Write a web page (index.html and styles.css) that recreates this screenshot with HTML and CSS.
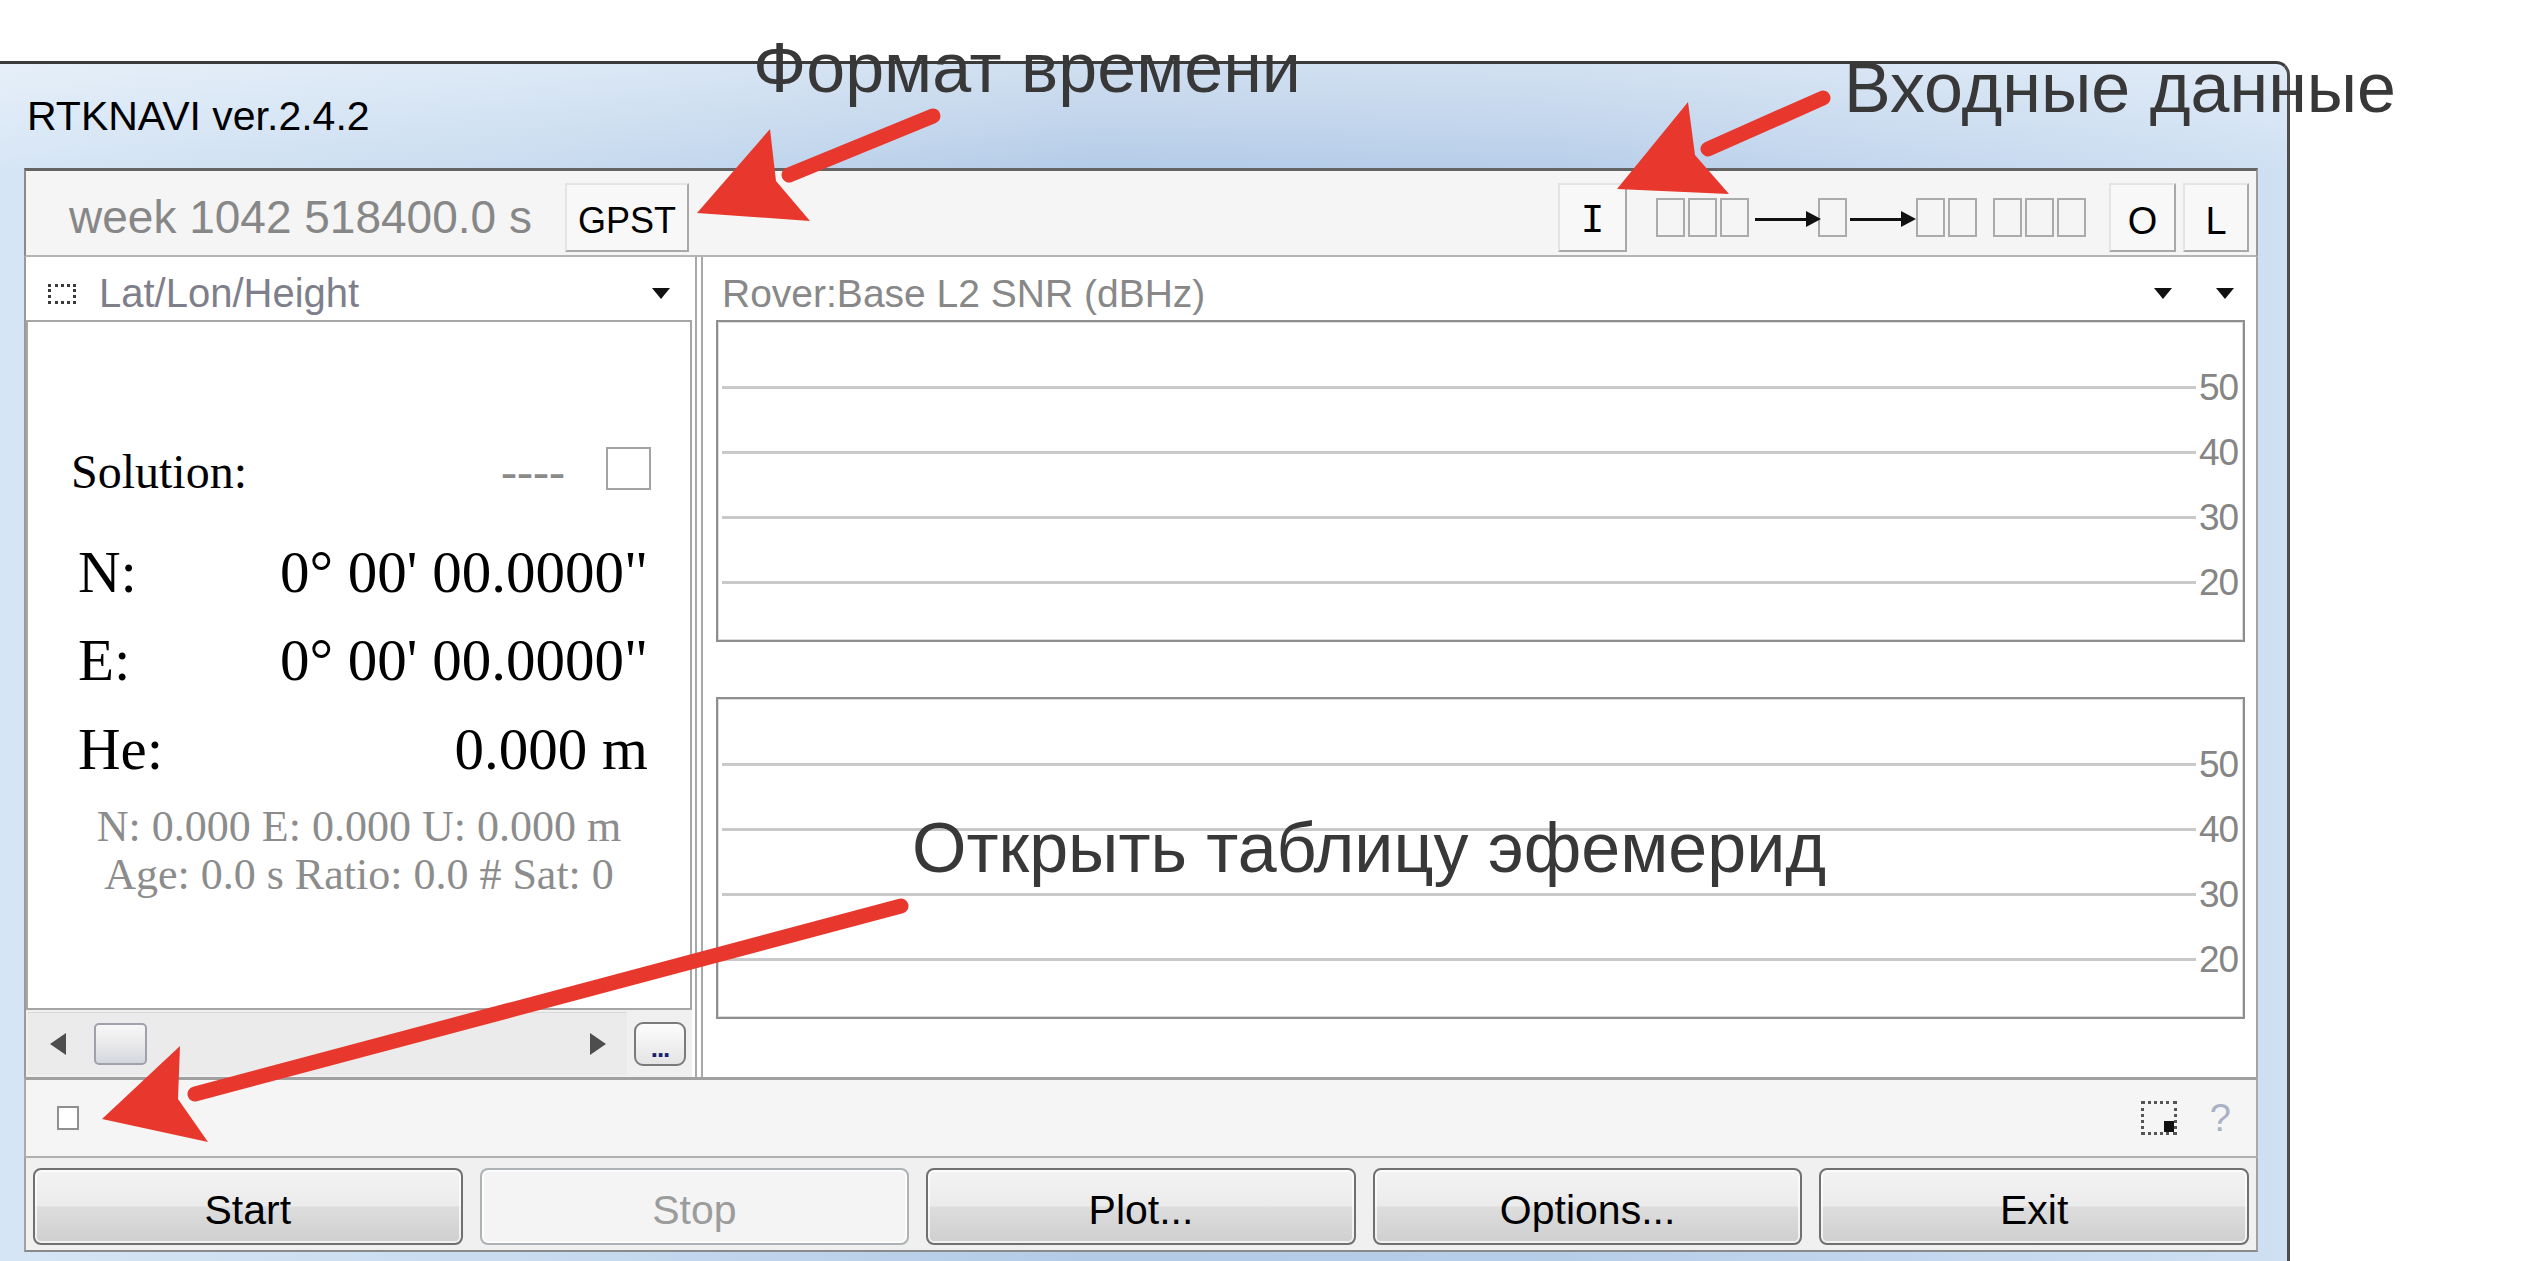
FILE: index.html
```html
<!DOCTYPE html>
<html>
<head>
<meta charset="utf-8">
<title>RTKNAVI ver.2.4.2</title>
<link rel="stylesheet" href="styles.css">
</head>
<body>
<div class="window">
  <div class="titlebar"><span class="title">RTKNAVI ver.2.4.2</span></div>
  <div class="client">
    <div class="toolbar">
      <span class="time">week 1042 518400.0 s</span>
      <span class="sbtn gpst">GPST</span>
      <span class="sbtn mono ibtn">I</span>
      <div class="streams">
        <span class="tofu first"></span><span class="tofu"></span><span class="tofu"></span>
        <span class="flow"></span>
        <span class="tofu t4"></span>
        <span class="flow f2"></span>
        <span class="tofu t5"></span><span class="tofu"></span>
        <span class="tofu t7"></span><span class="tofu"></span><span class="tofu"></span>
      </div>
      <span class="sbtn sans obtn">O</span>
      <span class="sbtn sans lbtn">L</span>
    </div>

    <div class="middle">
      <div class="leftpane">
        <div class="phead lhead">
          <span class="dotsicon"></span>
          <span class="ptitle ltitle">Lat/Lon/Height</span>
          <span class="drop ldrop"></span>
        </div>
        <div class="solbox">
          <div class="solrow">
            <span class="sollabel">Solution:</span>
            <span class="dash">----</span>
            <span class="chk"></span>
          </div>
          <div class="coord first"><span>N:</span><span>0° 00' 00.0000"</span></div>
          <div class="coord"><span>E:</span><span>0° 00' 00.0000"</span></div>
          <div class="coord he"><span>He:</span><span>0.000 m</span></div>
          <div class="sub first">N: 0.000 E: 0.000 U: 0.000 m</div>
          <div class="sub">Age: 0.0 s Ratio: 0.0 # Sat: 0</div>
        </div>
        <div class="scrollrow">
          <div class="track">
            <span class="arr-l"></span>
            <span class="thumb"></span>
            <span class="arr-r"></span>
          </div>
          <span class="more">...</span>
        </div>
      </div>

      <div class="splitter"></div>

      <div class="rightpane">
        <div class="phead rhead">
          <span class="ptitle rtitle">Rover:Base L2 SNR (dBHz)</span>
          <span class="drop d1"></span>
          <span class="drop d2"></span>
        </div>
        <div class="chart">
          <div class="grow"><span class="gline"></span><span class="glabel">50</span></div>
          <div class="grow"><span class="gline"></span><span class="glabel">40</span></div>
          <div class="grow"><span class="gline"></span><span class="glabel">30</span></div>
          <div class="grow"><span class="gline"></span><span class="glabel">20</span></div>
        </div>
        <div class="chart second">
          <div class="grow"><span class="gline"></span><span class="glabel">50</span></div>
          <div class="grow"><span class="gline"></span><span class="glabel">40</span></div>
          <div class="grow"><span class="gline"></span><span class="glabel">30</span></div>
          <div class="grow"><span class="gline"></span><span class="glabel">20</span></div>
        </div>
      </div>
    </div>

    <div class="status">
      <span class="ephem"></span>
      <span class="resize"><span class="knob"></span></span>
      <span class="help">?</span>
    </div>

    <div class="btnrow">
      <button class="btn">Start</button>
      <button class="btn disabled">Stop</button>
      <button class="btn">Plot...</button>
      <button class="btn">Options...</button>
      <button class="btn">Exit</button>
    </div>
  </div>
</div>

<svg class="arrows" width="2536" height="1261" viewBox="0 0 2536 1261">
  <line x1="933" y1="116" x2="789" y2="175" stroke="#e8382d" stroke-width="15" stroke-linecap="round"/>
  <polygon points="697,213 770,129 776,181 810,221" fill="#e8382d"/>
  <line x1="1823" y1="98" x2="1708" y2="149" stroke="#e8382d" stroke-width="15" stroke-linecap="round"/>
  <polygon points="1617,189 1688,102 1695,155 1729,194" fill="#e8382d"/>
  <line x1="901" y1="906" x2="195" y2="1094" stroke="#e8382d" stroke-width="15" stroke-linecap="round"/>
  <polygon points="102,1119 180,1046 178,1099 208,1142" fill="#e8382d"/>
</svg>

<div class="annot a1">Формат времени</div>
<div class="annot a2">Входные данные</div>
<div class="annot a3">Открыть таблицу эфемерид</div>
</body>
</html>
```

FILE: styles.css
```css
* { box-sizing: border-box; }
html, body { margin: 0; padding: 0; background: #fff; }
body {
  width: 2536px;
  height: 1261px;
  overflow: hidden;
  position: relative;
  padding-top: 61px;
  font-family: "Liberation Sans", Arial, sans-serif;
}

/* ---------- window frame ---------- */
.window {
  width: 2290px;
  height: 1200px;
  border-top: 3px solid #3b3b3b;
  border-right: 3px solid #4d4d4d;
  border-top-right-radius: 14px;
  background:
    linear-gradient(180deg, rgba(255,255,255,0.38) 0, rgba(255,255,255,0) 110px),
    linear-gradient(90deg, #d6e5f5 0%, #c9dcf0 22%, #b3cbe7 48%, #b7cee9 68%, #cfe0f3 100%);
}
.titlebar {
  height: 104px;
  padding-left: 27px;
  line-height: 104px;
  font-size: 41px;
  color: #000;
  white-space: nowrap;
}
.client {
  margin-left: 24px;
  width: 2234px;
  height: 1084px;
  display: flex;
  flex-direction: column;
  background: #f0f0f0;
}

/* ---------- toolbar ---------- */
.toolbar {
  height: 89px;
  flex: none;
  display: flex;
  align-items: flex-start;
  padding-top: 12px;
  padding-right: 7px;
  border-top: 3px solid #646464;
  border-left: 2px solid #8a8a8a;
  border-right: 2px solid #9a9a9a;
  border-bottom: 2px solid #b4b4b4;
  background: #f5f5f5;
}
.time {
  margin-left: 43px;
  width: 496px;
  height: 69px;
  font-size: 46px;
  line-height: 69px;
  color: #878787;
  white-space: nowrap;
}
.sbtn {
  display: block;
  height: 69px;
  text-align: center;
  border: 2px solid;
  border-color: #e4e4e4 #a9a9a9 #a9a9a9 #e4e4e4;
  background: #f8f8f8;
  color: #000;
}
.gpst {
  width: 124px;
  font-size: 36px;
  padding-top: 6px;
  line-height: 59px;
}
.mono {
  font-family: "Liberation Mono", "Courier New", monospace;
  font-size: 40px;
  padding-top: 8px;
  line-height: 57px;
}
.sans {
  font-size: 38px;
  padding-top: 8px;
  line-height: 57px;
}
.ibtn { width: 69px; margin-left: auto; }
.obtn { width: 67px; margin-left: 23px; }
.lbtn { width: 66px; margin-left: 7px; }

.streams {
  display: flex;
  align-items: center;
  height: 69px;
  margin-left: 29px;
}
.tofu {
  display: block;
  width: 29px;
  height: 39px;
  border: 2px solid #ababab;
  margin-left: 3px;
}
.tofu.first { margin-left: 0; }
.tofu.t4 { margin-left: 1px; }
.tofu.t5 { margin-left: 4px; }
.tofu.t7 { margin-left: 16px; }
.flow {
  display: block;
  position: relative;
  width: 62px;
  height: 3px;
  margin-left: 6px;
  margin-top: 4px;
  background: #111;
}
.flow.f2 { margin-left: 3px; }
.flow::after {
  content: "";
  position: absolute;
  right: -4px;
  top: -7px;
  border-left: 15px solid #111;
  border-top: 8px solid transparent;
  border-bottom: 8px solid transparent;
}

/* ---------- middle area ---------- */
.middle {
  height: 820px;
  flex: none;
  display: flex;
  background: #fff;
}
.leftpane {
  width: 668px;
  flex: none;
  display: flex;
  flex-direction: column;
  border-left: 2px solid #9a9a9a;
}
.phead {
  height: 63px;
  flex: none;
  display: flex;
  align-items: center;
  padding-top: 10px;
}
.ptitle {
  font-size: 40px;
  line-height: 53px;
  white-space: nowrap;
}
.dotsicon {
  width: 28px;
  height: 20px;
  margin-left: 22px;
  border: 3px dotted #3a3a3a;
}
.ltitle { margin-left: 23px; color: #7f7f8c; }
.drop {
  width: 0;
  height: 0;
  border-left: 9px solid transparent;
  border-right: 9px solid transparent;
  border-top: 11px solid #111;
}
.ldrop { margin-left: auto; margin-right: 22px; }

.solbox {
  height: 690px;
  flex: none;
  border: 2px solid #a6a6a6;
  padding-top: 120px;
  font-family: "Liberation Serif", "Times New Roman", serif;
  color: #000;
}
.solrow {
  display: flex;
  align-items: flex-start;
  height: 60px;
  line-height: 60px;
  font-size: 48px;
  padding-left: 43px;
  padding-right: 39px;
}
.dash { margin-left: auto; color: #8a8a8a; }
.chk {
  width: 45px;
  height: 43px;
  margin-top: 5px;
  margin-left: 41px;
  border: 2px solid #a3a3a3;
  background: #fff;
}
.coord {
  display: flex;
  justify-content: space-between;
  height: 88px;
  line-height: 88px;
  font-size: 59px;
  padding-left: 50px;
  padding-right: 42px;
  white-space: nowrap;
}
.coord.first { margin-top: 26px; }
.coord.he { height: 90px; line-height: 90px; }
.sub {
  height: 48px;
  line-height: 48px;
  font-size: 44px;
  text-align: center;
  color: #8c8c8c;
  white-space: nowrap;
}
.sub.first { margin-top: 9px; }

.scrollrow {
  height: 67px;
  flex: none;
  display: flex;
  align-items: center;
  padding-left: 2px;
  background: #f0f0f0;
}
.track {
  width: 599px;
  height: 63px;
  display: flex;
  align-items: center;
  padding-left: 22px;
  background: #ebebeb;
  border-top: 1px solid #d9d9d9;
}
.arr-l {
  width: 0;
  height: 0;
  border-right: 16px solid #4e4e4e;
  border-top: 11px solid transparent;
  border-bottom: 11px solid transparent;
}
.thumb {
  width: 53px;
  height: 42px;
  margin-left: 28px;
  border: 2px solid #9fa3a9;
  border-radius: 5px;
  background: linear-gradient(180deg, #f7f7f7 0%, #e9e9eb 50%, #d3d7dd 100%);
}
.arr-r {
  width: 0;
  height: 0;
  margin-left: auto;
  margin-right: 21px;
  border-left: 16px solid #4e4e4e;
  border-top: 11px solid transparent;
  border-bottom: 11px solid transparent;
}
.more {
  width: 52px;
  height: 44px;
  margin-left: 7px;
  display: flex;
  align-items: flex-end;
  justify-content: center;
  padding-bottom: 6px;
  border: 2px solid #7a7a7a;
  border-radius: 9px;
  background: linear-gradient(180deg, #fdfdfd, #e4e4e4);
  font-size: 26px;
  font-weight: bold;
  line-height: 20px;
  letter-spacing: -1px;
  color: #1e1e70;
}

.splitter {
  width: 22px;
  flex: none;
  background: linear-gradient(90deg, #fff 0, #fff 3px, #a8a8a8 3px, #a8a8a8 5px, #fff 5px, #fff 9px, #a8a8a8 9px, #a8a8a8 11px, #fff 11px);
}

.rightpane {
  width: 1544px;
  flex: none;
  display: flex;
  flex-direction: column;
  border-right: 2px solid #a3a3a3;
}
.rtitle { margin-left: 8px; color: #888; font-size: 39px; }
.d1 { margin-left: auto; }
.d2 { margin-left: 44px; margin-right: 22px; }

.chart {
  height: 322px;
  flex: none;
  margin-left: 2px;
  margin-right: 11px;
  border: 2px solid #8e8e8e;
  box-shadow: inset 0 0 0 1px #dcdcdc;
  padding: 33px 0 0 4px;
  display: flex;
  flex-direction: column;
  background: #fff;
}
.chart.second { margin-top: 55px; }
.grow {
  height: 65px;
  flex: none;
  display: flex;
  align-items: center;
}
.gline {
  flex: 1;
  height: 3px;
  background: #c9c9c9;
}
.glabel {
  width: 47px;
  padding-left: 3px;
  font-size: 37px;
  line-height: 65px;
  letter-spacing: -1px;
  color: #858585;
}

/* ---------- status bar ---------- */
.status {
  height: 81px;
  flex: none;
  display: flex;
  align-items: center;
  padding-right: 25px;
  border-top: 3px solid #a0a0a0;
  border-bottom: 2px solid #b0b0b0;
  border-left: 2px solid #aaa;
  border-right: 2px solid #aaa;
  background: #f5f5f5;
}
.ephem {
  width: 22px;
  height: 24px;
  margin-left: 31px;
  border: 2px solid #8f8f8f;
  background: #fff;
}
.resize {
  width: 36px;
  height: 34px;
  margin-left: auto;
  display: flex;
  align-items: flex-end;
  justify-content: flex-end;
  border: 3px dotted #555;
}
.knob {
  width: 10px;
  height: 11px;
  background: #111;
}
.help {
  margin-left: 33px;
  font-size: 38px;
  line-height: 40px;
  color: #aab1c4;
}

/* ---------- buttons ---------- */
.btnrow {
  height: 94px;
  flex: none;
  display: flex;
  gap: 17px;
  padding: 10px 7px 0;
  border-left: 2px solid #a0a0a0;
  border-right: 2px solid #a0a0a0;
  border-bottom: 2px solid #8a8a8a;
  background: #f0f0f0;
}
.btn {
  flex: 1;
  height: 77px;
  margin: 0;
  padding: 8px 0 0;
  border: 2px solid #707070;
  border-radius: 8px;
  background: linear-gradient(180deg, #f3f3f3 0%, #ebebeb 49%, #dddddd 51%, #cfcfcf 100%);
  box-shadow: inset 0 0 0 2px rgba(255,255,255,0.7);
  font-family: "Liberation Sans", Arial, sans-serif;
  font-size: 41px;
  line-height: 65px;
  color: #000;
  text-align: center;
}
.btn.disabled {
  border-color: #adb2b5;
  background: #f4f4f4;
  color: #9c9c9c;
}

/* ---------- annotations ---------- */
.arrows {
  position: absolute;
  left: 0;
  top: 0;
  z-index: 5;
  pointer-events: none;
}
.annot {
  position: absolute;
  z-index: 6;
  font-family: "Liberation Sans", Arial, sans-serif;
  font-size: 70px;
  line-height: 70px;
  color: #383838;
  white-space: nowrap;
}
.a1 { left: 753px; top: 33px; }
.a2 { left: 1844px; top: 53px; }
.a3 { left: 912px; top: 813px; }
```
